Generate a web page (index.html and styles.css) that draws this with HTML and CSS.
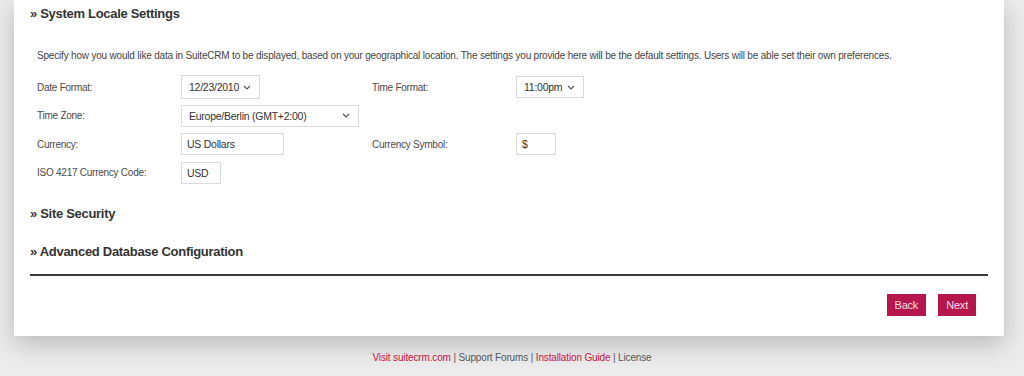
FILE: index.html
```html
<!DOCTYPE html>
<html>
<head>
<meta charset="utf-8">
<link rel="stylesheet" href="styles.css">
</head>
<body>
<div class="panel">
  <h2 class="section">» System Locale Settings</h2>
  <p class="intro">Specify how you would like data in SuiteCRM to be displayed, based on your geographical location. The settings you provide here will be the default settings. Users will be able set their own preferences.</p>
  <div class="form">
    <div class="label">Date Format:</div>
    <div class="cell"><div class="select w-date"><span>12/23/2010</span><svg width="8" height="5" viewBox="0 0 8 5"><path d="M1 1l3 3 3-3" fill="none" stroke="#555" stroke-width="1.2"/></svg></div></div>
    <div class="label">Time Format:</div>
    <div class="cell"><div class="select w-time"><span>11:00pm</span><svg width="8" height="5" viewBox="0 0 8 5"><path d="M1 1l3 3 3-3" fill="none" stroke="#555" stroke-width="1.2"/></svg></div></div>

    <div class="label">Time Zone:</div>
    <div class="cell span3"><div class="select w-zone"><span>Europe/Berlin (GMT+2:00)</span><svg width="8" height="5" viewBox="0 0 8 5"><path d="M1 1l3 3 3-3" fill="none" stroke="#555" stroke-width="1.2"/></svg></div></div>

    <div class="label">Currency:</div>
    <div class="cell"><div class="input w-cur">US Dollars</div></div>
    <div class="label">Currency Symbol:</div>
    <div class="cell"><div class="input w-sym">$</div></div>

    <div class="label">ISO 4217 Currency Code:</div>
    <div class="cell span3"><div class="input w-iso">USD</div></div>
  </div>
  <h2 class="section sec-security">» Site Security</h2>
  <h2 class="section sec-db">» Advanced Database Configuration</h2>
  <div class="rule"></div>
  <div class="actions">
    <button class="btn">Back</button>
    <button class="btn">Next</button>
  </div>
</div>
<div class="footer">
  <a class="link">Visit suitecrm.com</a> | Support Forums | <a class="link">Installation Guide</a> | License
</div>
</body>
</html>
```

FILE: styles.css
```css
html, body {
  margin: 0;
  padding: 0;
}
body {
  background: #ececec;
  font-family: "Liberation Sans", Arial, sans-serif;
  color: #444;
  height: 376px;
  overflow: hidden;
}
.panel {
  margin-left: 14px;
  width: 990px;
  background: #fff;
  box-shadow: 0 8px 24px rgba(0, 0, 0, 0.22);
  padding: 6px 16px 20px 16px;
  box-sizing: border-box;
}
.section {
  margin: 0;
  font-size: 13px;
  line-height: 16px;
  font-weight: bold;
  color: #333;
  letter-spacing: -0.3px;
}
.intro {
  margin: 27px 0 0 7px;
  font-size: 10px;
  letter-spacing: -0.19px;
  line-height: 14px;
  color: #444;
}
.form {
  margin: 10px 0 0 7px;
  display: grid;
  grid-template-columns: 144px 191px 144px 1fr;
  grid-auto-rows: 28.5px;
  align-items: center;
  font-size: 10px;
  letter-spacing: -0.25px;
}
.label {
  color: #4a4a4a;
}
.span3 {
  grid-column: span 3;
}
.select, .input {
  box-sizing: border-box;
  border: 1px solid #dadada;
  height: 22px;
  display: flex;
  align-items: center;
  font-size: 10.5px;
  color: #333;
  background: #fff;
}
.select {
  justify-content: space-between;
  padding: 0 8px 0 7px;
}
.input {
  padding: 0 5px;
}
.w-date { width: 79px; height: 24px; }
.w-time { width: 68px; height: 22px; }
.w-zone { width: 178px; }
.w-cur { width: 103px; }
.w-sym { width: 40px; }
.w-iso { width: 40px; }
.sec-security {
  margin-top: 19px;
}
.sec-db {
  margin-top: 22px;
}
.rule {
  margin-top: 14px;
  height: 2px;
  background: #3a3a3a;
}
.actions {
  margin-top: 18px;
  display: flex;
  justify-content: flex-end;
  gap: 12px;
  padding-right: 12px;
}
.btn {
  font-family: "Liberation Sans", Arial, sans-serif;
  font-size: 11px;
  letter-spacing: -0.2px;
  height: 22px;
  padding: 0 8px;
  border: 0;
  background: #b5174c;
  color: #f6dde6;
}
.footer {
  text-align: center;
  font-size: 10px;
  letter-spacing: -0.15px;
  color: #555;
  margin-top: 15px;
  line-height: 14px;
}
.link {
  color: #c4153d;
}
```
